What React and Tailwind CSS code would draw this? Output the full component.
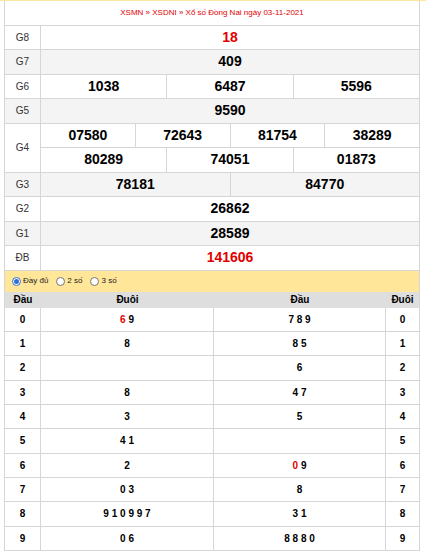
import React from "react";

function PrizeRow({ label, gray, values, red }) {
  const bg = gray ? "bg-[#f4f4f4]" : "bg-white";
  return (
    <div className={`flex h-[24.5px] border-b border-[#d6d6d6] ${bg}`}>
      <div className="w-[36px] shrink-0 border-r border-[#d6d6d6] flex items-center justify-center text-[10px] text-[#333]">
        {label}
      </div>
      <div className="flex-1 flex">
        {values.map((v, i) => (
          <div
            key={i}
            className={`flex-1 flex items-center justify-center text-[14px] font-bold ${
              red ? "text-[#e20000]" : "text-black"
            } ${i > 0 ? "border-l border-[#d6d6d6]" : ""}`}
          >
            {v}
          </div>
        ))}
      </div>
    </div>
  );
}

function Cell({ children, last }) {
  return (
    <div
      className={`flex items-center justify-center text-[10px] font-bold text-black ${
        last ? "" : "border-r border-[#d6d6d6]"
      }`}
    >
      {children}
    </div>
  );
}

function Digits({ s, redIdx }) {
  if (!s) return null;
  const parts = s.split(" ");
  return (
    <span className="whitespace-pre">
      {parts.map((p, i) => (
        <React.Fragment key={i}>
          {i > 0 ? " " : ""}
          <span className={i === redIdx ? "text-[#e20000]" : ""}>{p}</span>
        </React.Fragment>
      ))}
    </span>
  );
}

const left = ["6 9", "8", "", "8", "3", "4 1", "2", "0 3", "9 1 0 9 9 7", "0 6"];
const right = ["7 8 9", "8 5", "6", "4 7", "5", "", "0 9", "8", "3 1", "8 8 8 0"];
const leftRed = { 0: 0 };
const rightRed = { 6: 0 };

function Radio({ checked, label }) {
  return (
    <div className="flex items-center gap-[2px]">
      {checked ? (
        <span className="w-[9px] h-[9px] rounded-full border border-[#2f6fd6] bg-white flex items-center justify-center">
          <span className="w-[5px] h-[5px] rounded-full bg-[#2f6fd6]" />
        </span>
      ) : (
        <span className="w-[9px] h-[9px] rounded-full border border-[#767676] bg-white" />
      )}
      <span className="text-[8px] text-[#222]">{label}</span>
    </div>
  );
}

export default function App() {
  return (
    <div
      className="w-[426px] h-[555px] bg-white overflow-hidden"
      style={{ fontFamily: '"Liberation Sans", Arial, sans-serif' }}
    >
      <div className="h-px bg-[#fbe6a2]" />
      <div className="ml-[4px] w-[416px] border-x border-[#d6d6d6]">
        <div className="h-[24.5px] border-b border-[#d6d6d6] flex items-center justify-center text-[8px] text-[#e20000]">
          XSMN » XSDNI » Xổ số Đồng Nai ngày 03-11-2021
        </div>
        <PrizeRow label="G8" values={["18"]} red />
        <PrizeRow label="G7" gray values={["409"]} />
        <PrizeRow label="G6" values={["1038", "6487", "5596"]} />
        <PrizeRow label="G5" gray values={["9590"]} />
        <div className="flex h-[49px] border-b border-[#d6d6d6] bg-white">
          <div className="w-[36px] shrink-0 border-r border-[#d6d6d6] flex items-center justify-center text-[10px] text-[#333]">
            G4
          </div>
          <div className="flex-1 flex flex-col">
            <div className="flex h-[24.5px] border-b border-[#d6d6d6]">
              {["07580", "72643", "81754", "38289"].map((v, i) => (
                <div
                  key={i}
                  className={`flex-1 flex items-center justify-center text-[14px] font-bold text-black ${
                    i > 0 ? "border-l border-[#d6d6d6]" : ""
                  }`}
                >
                  {v}
                </div>
              ))}
            </div>
            <div className="flex flex-1">
              {["80289", "74051", "01873"].map((v, i) => (
                <div
                  key={i}
                  className={`flex-1 flex items-center justify-center text-[14px] font-bold text-black ${
                    i > 0 ? "border-l border-[#d6d6d6]" : ""
                  }`}
                >
                  {v}
                </div>
              ))}
            </div>
          </div>
        </div>
        <PrizeRow label="G3" gray values={["78181", "84770"]} />
        <PrizeRow label="G2" values={["26862"]} />
        <PrizeRow label="G1" gray values={["28589"]} />
        <PrizeRow label="ĐB" values={["141606"]} red />

        <div className="h-[21px] bg-[#ffe699] flex items-center pl-[7px] gap-[8px]">
          <Radio checked label="Đầy đủ" />
          <Radio label="2 số" />
          <Radio label="3 số" />
        </div>

        <div className="grid grid-cols-[36px_173px_172px_1fr] h-[16px] bg-[#dedede] text-[10px] font-bold text-black">
          <div className="flex items-center justify-center">Đầu</div>
          <div className="flex items-center justify-center">Đuôi</div>
          <div className="flex items-center justify-center">Đầu</div>
          <div className="flex items-center justify-center">Đuôi</div>
        </div>

        {left.map((l, i) => (
          <div
            key={i}
            className="grid grid-cols-[36px_173px_172px_1fr] h-[24.35px] border-b border-[#d6d6d6]"
          >
            <Cell>{i}</Cell>
            <Cell>
              <Digits s={l} redIdx={leftRed[i]} />
            </Cell>
            <Cell>
              <Digits s={right[i]} redIdx={rightRed[i]} />
            </Cell>
            <Cell last>{i}</Cell>
          </div>
        ))}
      </div>
    </div>
  );
}
